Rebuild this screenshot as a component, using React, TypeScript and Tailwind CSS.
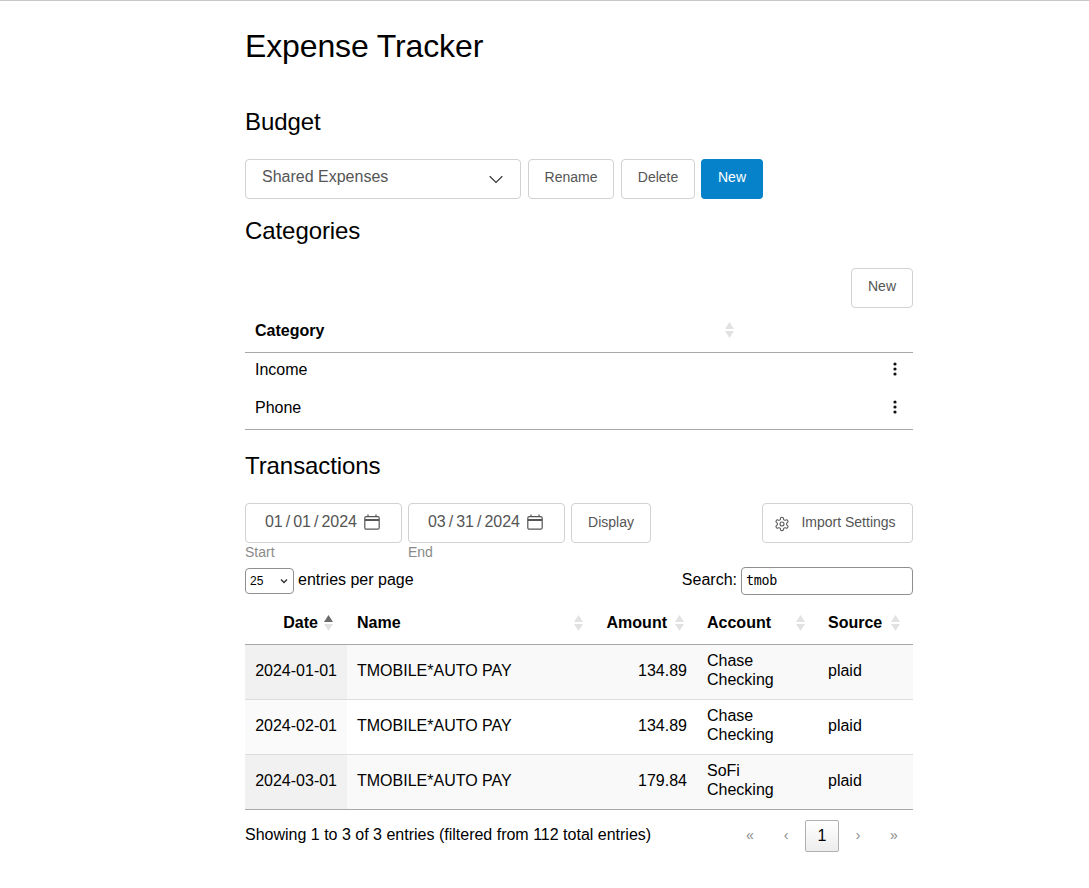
import React from 'react';

const rows = [
    { date: '2024-01-01', amount: '134.89', account: ['Chase', 'Checking'] },
    { date: '2024-02-01', amount: '134.89', account: ['Chase', 'Checking'] },
    { date: '2024-03-01', amount: '179.84', account: ['SoFi', 'Checking'] },
];

const SortArrows: React.FC<{ up?: boolean }> = ({ up }) => (
    <span className="flex flex-col gap-[2px] shrink-0">
        <svg width="9" height="7" viewBox="0 0 9 7"><path d="M4.5 0 L9 7 H0 Z" fill={up ? '#6b6b6b' : '#e2e2e2'} /></svg>
        <svg width="9" height="7" viewBox="0 0 9 7"><path d="M0 0 H9 L4.5 7 Z" fill="#e2e2e2" /></svg>
    </span>
);

const Calendar = () => (
    <svg width="16" height="16" viewBox="0 0 16 16" fill="none" stroke="#555" strokeWidth="1.2">
        <rect x="0.8" y="2.6" width="14.4" height="12.6" rx="1.5" />
        <path d="M1 6 H15" strokeWidth="2" />
        <path d="M4 0.5 V3 M12 0.5 V3" />
    </svg>
);

const Dots = () => (
    <svg width="8" height="16" viewBox="0 0 8 16" fill="#111" className="mb-[3px]"><circle cx="4" cy="3" r="1.6" /><circle cx="4" cy="8" r="1.6" /><circle cx="4" cy="13" r="1.6" /></svg>
);

const Btn: React.FC<{ className: string; children: React.ReactNode }> = ({ className, children }) => (
    <button className={`h-10 rounded border border-[#d1d1d6] text-[14px] text-[#555] bg-white flex items-center justify-center shrink-0 ${className}`}>
        {children}
    </button>
);

const DateBox: React.FC<{ label: string; m: string; d: string }> = ({ label, m, d }) => (
    <div className="w-[157px] shrink-0">
        <div className="h-10 rounded border border-[#d1d1d6] flex items-center justify-end pr-[44px] relative text-[16px] text-[#555]">
            <span className="mb-[2px]">{m}<span className="mx-[3px]">/</span>{d}<span className="mx-[3px]">/</span>2024</span>
            <span className="absolute right-[21px] top-[10px]"><Calendar /></span>
        </div>
        <div className="text-[14px] leading-[18px] text-[#8a8a8a]">{label}</div>
    </div>
);

export default function App() {
    return (
        <div className="min-h-[888px] bg-white border-t border-[#c8c8c8] text-[16px] text-black font-['Liberation_Sans',Arial,sans-serif]">
            <div className="w-[668px] ml-[245px]">
                <h1 className="text-[32px] leading-[38px] pt-[26px] tracking-[-0.13px]">Expense Tracker</h1>

                <h2 className="text-[24px] leading-[29px] mt-[42px] tracking-[-0.08px]">Budget</h2>
                <div className="flex mt-[23px]">
                    <div className="w-[276px] h-10 rounded border border-[#d1d1d6] flex items-center justify-between pl-4 pr-[16px] text-[#555]">
                        <span className="mb-[4px]">Shared Expenses</span>
                        <svg width="16" height="16" viewBox="0 0 16 16" fill="none" stroke="#333" strokeWidth="1.1" strokeLinecap="round"><path d="M2 5.5 L8 11.5 L14 5.5" /></svg>
                    </div>
                    <Btn className="w-[86px] ml-[7px] pb-[3px]">Rename</Btn>
                    <Btn className="w-[74px] ml-[7px] pb-[3px]">Delete</Btn>
                    <button className="w-[62px] h-10 ml-[6px] rounded bg-[#0582ca] text-white text-[14px] flex items-center justify-center pb-[3px]">New</button>
                </div>

                <h2 className="text-[24px] leading-[29px] mt-[17px] tracking-[-0.08px]">Categories</h2>
                <div className="flex justify-end mt-[23px]">
                    <Btn className="w-[62px] pb-[3px]">New</Btn>
                </div>
                <div className="h-[45px] border-b border-[#a8a8a8] flex items-center relative font-bold pl-[10px]">
                    <span className="mt-[2px]">Category</span>
                    <span className="absolute left-[480px] top-[14px]"><SortArrows /></span>
                </div>
                <div className="h-[38px] flex items-center justify-between pl-[10px] pr-[14px] pb-[4px]">
                    <span>Income</span>
                    <Dots />
                </div>
                <div className="h-[39px] border-b border-[#a8a8a8] flex items-center justify-between pl-[10px] pr-[14px] pb-[4px]">
                    <span>Phone</span>
                    <Dots />
                </div>

                <h2 className="text-[24px] leading-[29px] mt-[21px] tracking-[-0.08px]">Transactions</h2>
                <div className="flex mt-[23px]">
                    <DateBox label="Start" m="01" d="01" />
                    <div className="w-[6px] shrink-0" />
                    <DateBox label="End" m="03" d="31" />
                    <Btn className="w-[80px] ml-[6px] pb-[2px]">Display</Btn>
                    <Btn className="w-[151px] ml-auto gap-[11px] pb-[2px] pr-[5px]">
                        <svg width="16" height="16" viewBox="0 0 24 24" fill="none" stroke="#555" strokeWidth="1.6" className="mt-[3px]">
                            <path d="M12.22 2h-.44a2 2 0 0 0-2 2v.18a2 2 0 0 1-1 1.73l-.43.25a2 2 0 0 1-2 0l-.15-.08a2 2 0 0 0-2.73.73l-.22.38a2 2 0 0 0 .73 2.73l.15.1a2 2 0 0 1 1 1.72v.51a2 2 0 0 1-1 1.74l-.15.09a2 2 0 0 0-.73 2.73l.22.38a2 2 0 0 0 2.73.73l.15-.08a2 2 0 0 1 2 0l.43.25a2 2 0 0 1 1 1.73V20a2 2 0 0 0 2 2h.44a2 2 0 0 0 2-2v-.18a2 2 0 0 1 1-1.73l.43-.25a2 2 0 0 1 2 0l.15.08a2 2 0 0 0 2.73-.73l.22-.39a2 2 0 0 0-.73-2.73l-.15-.08a2 2 0 0 1-1-1.74v-.5a2 2 0 0 1 1-1.74l.15-.09a2 2 0 0 0 .73-2.73l-.22-.38a2 2 0 0 0-2.73-.73l-.15.08a2 2 0 0 1-2 0l-.43-.25a2 2 0 0 1-1-1.73V4a2 2 0 0 0-2-2z" />
                            <circle cx="12" cy="12" r="3" />
                        </svg>
                        Import Settings
                    </Btn>
                </div>

                <div className="flex justify-between items-center mt-[6px] h-[28px]">
                    <div className="flex items-center gap-[4px]">
                        <div className="w-[49px] h-[26px] rounded border border-[#8f8f8f] flex items-center justify-between pl-[4px] pr-[4px]">
                            <span className="font-['Liberation_Sans',sans-serif] text-[12px]">25</span>
                            <svg width="10" height="10" viewBox="0 0 10 10" fill="none" stroke="#333" strokeWidth="1.4"><path d="M2 3.5 L5 6.5 L8 3.5" /></svg>
                        </div>
                        <span className="mb-[2px]">entries per page</span>
                    </div>
                    <div className="flex items-center gap-[4px]">
                        <span className="mb-[2px]">Search:</span>
                        <div className="w-[172px] h-[28px] rounded border border-[#8f8f8f] pl-[4px] flex items-center text-[13.33px] font-['DejaVu_Sans_Mono',monospace] tracking-[-0.3px]">tmob</div>
                    </div>
                </div>

                <table className="w-[668px] table-fixed border-collapse mt-[5px]">
                    <colgroup>
                        <col className="w-[102px]" />
                        <col className="w-[250px]" />
                        <col className="w-[100px]" />
                        <col className="w-[121px]" />
                        <col className="w-[95px]" />
                    </colgroup>
                    <thead>
                        <tr className="h-[44px] border-b border-[#a8a8a8]">
                            <th className="p-0 pt-[2px] pr-[14px]"><div className="flex items-center justify-end gap-[6px]"><span>Date</span><SortArrows up /></div></th>
                            <th className="p-0 pt-[2px] pl-[10px] pr-[14px]"><div className="flex items-center justify-between"><span>Name</span><SortArrows /></div></th>
                            <th className="p-0 pt-[2px] pr-[13px]"><div className="flex items-center justify-end gap-[8px]"><span>Amount</span><SortArrows /></div></th>
                            <th className="p-0 pt-[2px] pl-[10px] pr-[13px]"><div className="flex items-center justify-between"><span>Account</span><SortArrows /></div></th>
                            <th className="p-0 pt-[2px] pl-[10px] pr-[13px]"><div className="flex items-center justify-between"><span>Source</span><SortArrows /></div></th>
                        </tr>
                    </thead>
                    <tbody>
                        {rows.map((row, i) => (
                            <tr key={row.date} className={`h-[55px] ${i < 2 ? 'border-b border-[#dddddd]' : 'border-b border-[#a8a8a8]'} ${i % 2 === 0 ? 'bg-[#f9f9f9]' : 'bg-white'}`}>
                                <td className={`p-0 pr-[10px] pb-[2px] text-right ${i % 2 === 0 ? 'bg-[#f1f1f1]' : 'bg-[#fafafa]'}`}>{row.date}</td>
                                <td className="p-0 pl-[10px] pb-[2px]">TMOBILE*AUTO PAY</td>
                                <td className="p-0 pr-[10px] pb-[2px] text-right">{row.amount}</td>
                                <td className="p-0 pl-[10px] pb-[3px] leading-[19px]">{row.account[0]}<br />{row.account[1]}</td>
                                <td className="p-0 pl-[10px] pb-[2px]">plaid</td>
                            </tr>
                        ))}
                    </tbody>
                </table>

                <div className="flex justify-between items-center mt-[10px]">
                    <span className="mb-[2px]">Showing 1 to 3 of 3 entries (filtered from 112 total entries)</span>
                    <div className="flex items-center text-[14px] text-[#888] h-[32px] mr-[2px]">
                        <span className="w-[34px] text-center">«</span>
                        <span className="w-[38px] text-center">‹</span>
                        <span className="w-[34px] h-[32px] rounded-[2px] border border-[#b0b0b0] bg-gradient-to-b from-white to-[#ededed] text-black text-[16px] flex items-center justify-center">1</span>
                        <span className="w-[38px] text-center">›</span>
                        <span className="w-[34px] text-center">»</span>
                    </div>
                </div>
            </div>
        </div>
    );
}
